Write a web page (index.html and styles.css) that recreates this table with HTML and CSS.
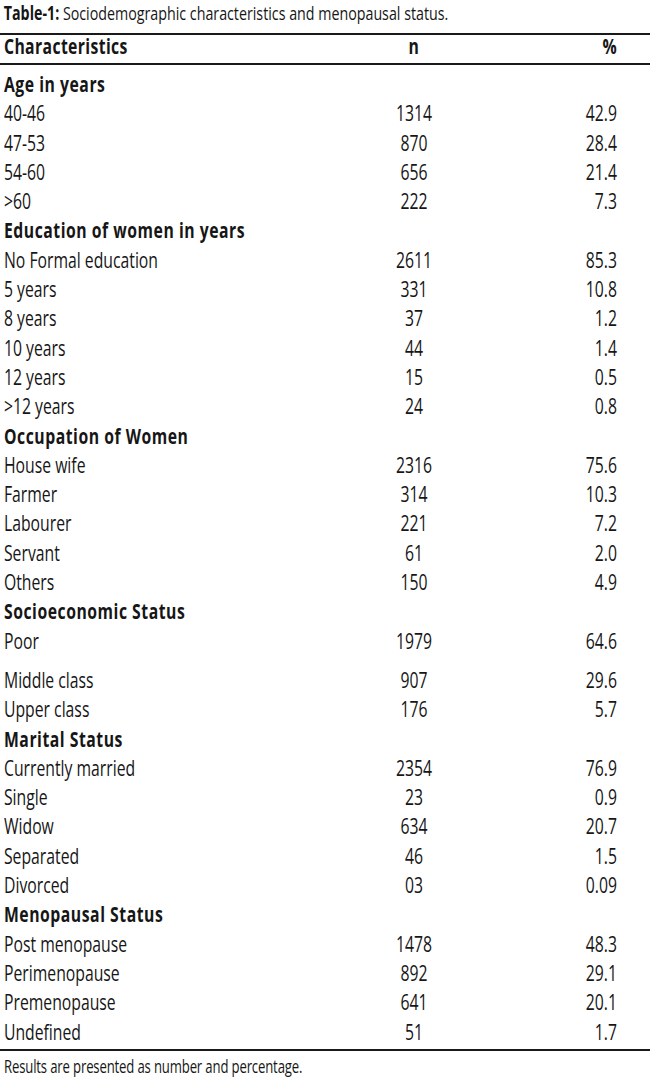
FILE: index.html
```html
<!DOCTYPE html>
<html lang="en">
<head>
<meta charset="utf-8">
<title>Table-1</title>
<link rel="stylesheet" href="styles.css">
</head>
<body>
<div class="frame">
<div class="page">
  <div class="title"><b>Table-1:</b> Sociodemographic characteristics and menopausal status.</div>
  <div class="table">
    <div class="row head"><span class="c1">Characteristics</span><span class="c2">n</span><span class="c3">%</span></div>
    <div class="body">
      <div class="row group"><span class="c1">Age in years</span></div>
      <div class="row"><span class="c1">40-46</span><span class="c2">1314</span><span class="c3">42.9</span></div>
      <div class="row"><span class="c1">47-53</span><span class="c2">870</span><span class="c3">28.4</span></div>
      <div class="row"><span class="c1">54-60</span><span class="c2">656</span><span class="c3">21.4</span></div>
      <div class="row"><span class="c1">&gt;60</span><span class="c2">222</span><span class="c3">7.3</span></div>
      <div class="row group"><span class="c1">Education of women in years</span></div>
      <div class="row"><span class="c1">No Formal education</span><span class="c2">2611</span><span class="c3">85.3</span></div>
      <div class="row"><span class="c1">5 years</span><span class="c2">331</span><span class="c3">10.8</span></div>
      <div class="row"><span class="c1">8 years</span><span class="c2">37</span><span class="c3">1.2</span></div>
      <div class="row"><span class="c1">10 years</span><span class="c2">44</span><span class="c3">1.4</span></div>
      <div class="row"><span class="c1">12 years</span><span class="c2">15</span><span class="c3">0.5</span></div>
      <div class="row"><span class="c1">&gt;12 years</span><span class="c2">24</span><span class="c3">0.8</span></div>
      <div class="row group"><span class="c1">Occupation of Women</span></div>
      <div class="row"><span class="c1">House wife</span><span class="c2">2316</span><span class="c3">75.6</span></div>
      <div class="row"><span class="c1">Farmer</span><span class="c2">314</span><span class="c3">10.3</span></div>
      <div class="row"><span class="c1">Labourer</span><span class="c2">221</span><span class="c3">7.2</span></div>
      <div class="row"><span class="c1">Servant</span><span class="c2">61</span><span class="c3">2.0</span></div>
      <div class="row"><span class="c1">Others</span><span class="c2">150</span><span class="c3">4.9</span></div>
      <div class="row group"><span class="c1">Socioeconomic Status</span></div>
      <div class="row tall"><span class="c1">Poor</span><span class="c2">1979</span><span class="c3">64.6</span></div>
      <div class="row"><span class="c1">Middle class</span><span class="c2">907</span><span class="c3">29.6</span></div>
      <div class="row"><span class="c1">Upper class</span><span class="c2">176</span><span class="c3">5.7</span></div>
      <div class="row group"><span class="c1">Marital Status</span></div>
      <div class="row"><span class="c1">Currently married</span><span class="c2">2354</span><span class="c3">76.9</span></div>
      <div class="row"><span class="c1">Single</span><span class="c2">23</span><span class="c3">0.9</span></div>
      <div class="row"><span class="c1">Widow</span><span class="c2">634</span><span class="c3">20.7</span></div>
      <div class="row"><span class="c1">Separated</span><span class="c2">46</span><span class="c3">1.5</span></div>
      <div class="row"><span class="c1">Divorced</span><span class="c2">03</span><span class="c3">0.09</span></div>
      <div class="row group"><span class="c1">Menopausal Status</span></div>
      <div class="row"><span class="c1">Post menopause</span><span class="c2">1478</span><span class="c3">48.3</span></div>
      <div class="row"><span class="c1">Perimenopause</span><span class="c2">892</span><span class="c3">29.1</span></div>
      <div class="row"><span class="c1">Premenopause</span><span class="c2">641</span><span class="c3">20.1</span></div>
      <div class="row"><span class="c1">Undefined</span><span class="c2">51</span><span class="c3">1.7</span></div>
    </div>
  </div>
  <div class="note">Results are presented as number and percentage.</div>
</div>
</div>
</body>
</html>
```

FILE: styles.css
```css
html, body {
  margin: 0;
  padding: 0;
  background: #ffffff;
}

body {
  font-family: "Open Sans", "Noto Sans", "DejaVu Sans", sans-serif;
  color: #161616;
}

.frame {
  width: 650px;
  height: 1090px;
  overflow: hidden;
}

.page {
  width: 866.67px;
  transform: scaleX(0.75);
  transform-origin: 0 0;
}

.title {
  height: 33px;
  box-sizing: border-box;
  padding-left: 5px;
  font-size: 19px;
  line-height: 27px;
  white-space: nowrap;
}

.title b {
  font-weight: 700;
}

.table {
  border-top: 2px solid #1a1a1a;
  border-bottom: 2px solid #1a1a1a;
}

.row {
  display: grid;
  grid-template-columns: 486.7px 120px 1fr;
  padding: 0 44px 0 5.3px;
  height: 29.3px;
  box-sizing: border-box;
  font-size: 21px;
  line-height: 24px;
  white-space: nowrap;
}

.row .c2 {
  text-align: center;
}

.row .c3 {
  text-align: right;
}

.row.head {
  height: 28px;
  font-weight: 700;
  letter-spacing: 0.5px;
  line-height: 22px;
  border-bottom: 2px solid #1a1a1a;
  box-sizing: content-box;
}

.body {
  padding-top: 7px;
}

.row.group {
  font-weight: 700;
  letter-spacing: 0.7px;
}

.row.tall {
  height: 39.3px;
}

.note {
  padding: 3px 0 0 5.3px;
  font-size: 17.5px;
  letter-spacing: -0.2px;
  line-height: 24px;
  white-space: nowrap;
}
```
